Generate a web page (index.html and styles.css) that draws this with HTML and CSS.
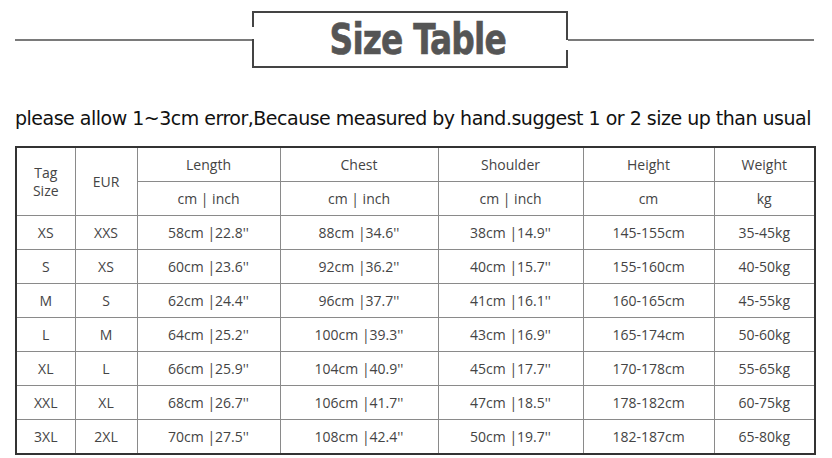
FILE: index.html
```html
<!DOCTYPE html>
<html>
<head>
<meta charset="utf-8">
<link rel="stylesheet" href="styles.css">
</head>
<body>
<div class="page">
  <div class="banner">
    <div class="rule rule-left"></div>
    <div class="title-box"><span class="title">Size Table</span></div>
    <div class="rule"></div>
  </div>
  <p class="note">please allow 1~3cm error,Because measured by hand.suggest 1 or 2 size up than usual</p>
  <table class="sizes">
    <colgroup>
      <col class="c-tag"><col class="c-eur"><col class="c-len"><col class="c-chest"><col class="c-sh"><col class="c-h"><col class="c-w">
    </colgroup>
    <tr><th rowspan="2" class="tag">Tag<br>Size</th><th rowspan="2">EUR</th><th>Length</th><th>Chest</th><th>Shoulder</th><th>Height</th><th>Weight</th></tr>
    <tr><th>cm | inch</th><th>cm | inch</th><th>cm | inch</th><th>cm</th><th>kg</th></tr>
    <tr><td>XS</td><td>XXS</td><td>58cm |22.8''</td><td>88cm |34.6''</td><td>38cm |14.9''</td><td>145-155cm</td><td>35-45kg</td></tr>
    <tr><td>S</td><td>XS</td><td>60cm |23.6''</td><td>92cm |36.2''</td><td>40cm |15.7''</td><td>155-160cm</td><td>40-50kg</td></tr>
    <tr><td>M</td><td>S</td><td>62cm |24.4''</td><td>96cm |37.7''</td><td>41cm |16.1''</td><td>160-165cm</td><td>45-55kg</td></tr>
    <tr><td>L</td><td>M</td><td>64cm |25.2''</td><td>100cm |39.3''</td><td>43cm |16.9''</td><td>165-174cm</td><td>50-60kg</td></tr>
    <tr><td>XL</td><td>L</td><td>66cm |25.9''</td><td>104cm |40.9''</td><td>45cm |17.7''</td><td>170-178cm</td><td>55-65kg</td></tr>
    <tr><td>XXL</td><td>XL</td><td>68cm |26.7''</td><td>106cm |41.7''</td><td>47cm |18.5''</td><td>178-182cm</td><td>60-75kg</td></tr>
    <tr><td>3XL</td><td>2XL</td><td>70cm |27.5''</td><td>108cm |42.4''</td><td>50cm |19.7''</td><td>182-187cm</td><td>65-80kg</td></tr>
  </table>
</div>
</body>
</html>
```
FILE: styles.css
```css
html, body {
  margin: 0;
  padding: 0;
  background: #ffffff;
}
.page {
  width: 832px;
  height: 458px;
  overflow: hidden;
  padding-left: 15px;
  box-sizing: border-box;
}
.banner {
  display: flex;
  align-items: flex-start;
  width: 799px;
  padding-top: 11px;
}
.rule {
  flex: 1;
  margin-top: 28px;
  border-top: 2px solid #7a7a7a;
  height: 0;
}
.rule-left {
  flex: 0 0 237px;
}
.title-box {
  position: relative;
  flex: 0 0 316px;
  box-sizing: border-box;
  height: 57px;
  border-top: 2px solid #444;
  border-bottom: 2px solid #444;
  display: flex;
  justify-content: center;
  align-items: center;
}
.title-box::before,
.title-box::after {
  content: "";
  position: absolute;
  top: -2px;
  bottom: -2px;
  width: 2px;
}
.title-box::before {
  left: 0;
  background: linear-gradient(to bottom, #444 0 16px, transparent 16px 28px, #444 28px);
}
.title-box::after {
  right: 0;
  background: linear-gradient(to bottom, #444 0 29px, transparent 29px 39px, #444 39px);
}
.title {
  font-family: "DejaVu Sans Condensed", "DejaVu Sans", sans-serif;
  font-weight: bold;
  font-size: 43px;
  line-height: 1;
  color: #555;
  display: inline-block;
  transform: scaleX(0.85);
  letter-spacing: -1px;
  margin-left: 16px;
  margin-top: 0px;
  -webkit-text-stroke: 0.6px #555;
}
.note {
  margin: 38px 0 0 0;
  font-family: "DejaVu Sans", sans-serif;
  font-size: 19px;
  letter-spacing: -0.5px;
  line-height: 24px;
  color: #111;
  white-space: nowrap;
}
.sizes {
  margin-top: 16px;
  width: 799px;
  table-layout: fixed;
  border-collapse: collapse;
  border: 2px solid #333;
  font-family: "Open Sans", sans-serif;
  font-size: 14px;
  color: #444;
}
.c-tag { width: 59px; }
.c-eur { width: 62px; }
.c-len { width: 143px; }
.c-chest { width: 158px; }
.c-sh { width: 145px; }
.c-h { width: 131px; }
.c-w { width: 101px; }
.sizes th,
.sizes td {
  border: 1px solid #8a8a8a;
  height: 33px;
  padding: 0;
  text-align: center;
  vertical-align: middle;
  font-weight: normal;
  line-height: 17px;
}
.sizes th.tag {
  line-height: 18px;
}
```
